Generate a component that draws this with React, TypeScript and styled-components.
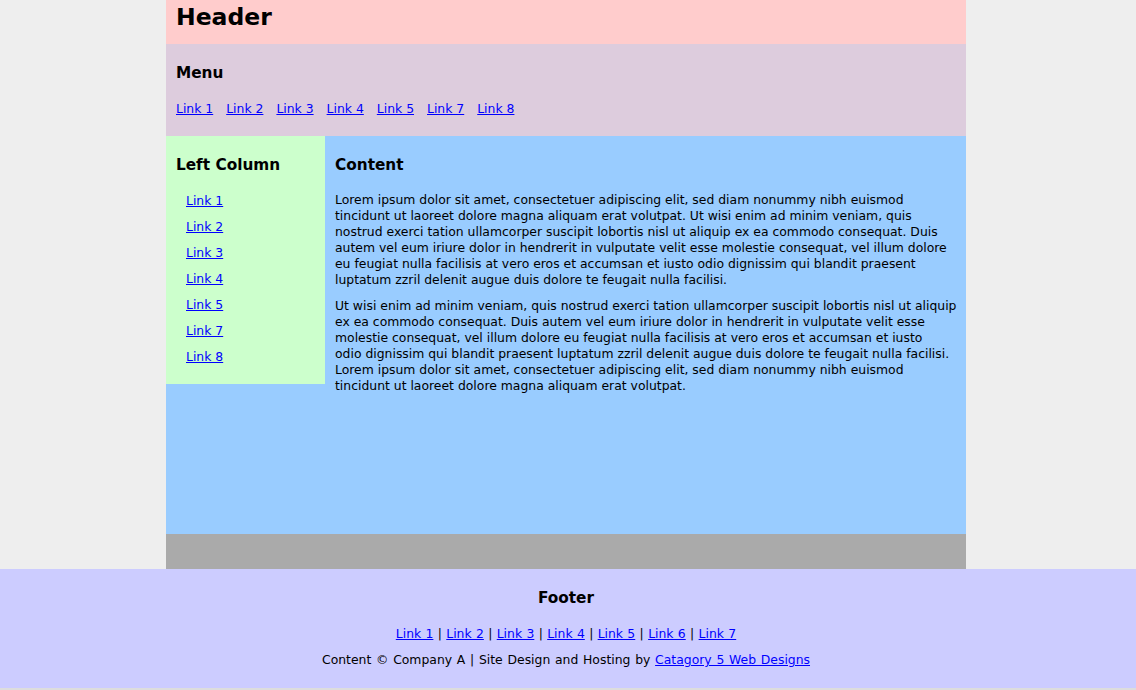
import React from 'react';
import styled, { createGlobalStyle } from 'styled-components';

const GlobalStyle = createGlobalStyle`
  html, body {
    margin: 0;
    padding: 0;
    background: #eeeeee;
    font-family: "DejaVu Sans", Verdana, sans-serif;
    font-size: 12.4px;
    line-height: 16px;
    color: #000;
  }
  a {
    color: #0000ff;
  }
`;

const menuLinks = ['Link 1', 'Link 2', 'Link 3', 'Link 4', 'Link 5', 'Link 7', 'Link 8'];
const footerLinks = ['Link 1', 'Link 2', 'Link 3', 'Link 4', 'Link 5', 'Link 6', 'Link 7'];

export default function App() {
  return (
    <>
      <GlobalStyle />
      <Page>
        <Header>
          <HeaderTitle>Header</HeaderTitle>
        </Header>

        <Menu>
          <SectionTitle>Menu</SectionTitle>
          <MenuLinks>
            {menuLinks.map((l) => (
              <a key={l} href="#">{l}</a>
            ))}
          </MenuLinks>
        </Menu>

        <Body>
          <LeftColumn>
            <SectionTitle>Left Column</SectionTitle>
            <SideList>
              {menuLinks.map((l) => (
                <li key={l}>
                  <a href="#">{l}</a>
                </li>
              ))}
            </SideList>
          </LeftColumn>

          <Content>
            <SectionTitle>Content</SectionTitle>
            <Paragraph>
              Lorem ipsum dolor sit amet, consectetuer adipiscing elit, sed diam nonummy nibh euismod
              tincidunt ut laoreet dolore magna aliquam erat volutpat. Ut wisi enim ad minim veniam, quis
              nostrud exerci tation ullamcorper suscipit lobortis nisl ut aliquip ex ea commodo consequat. Duis
              autem vel eum iriure dolor in hendrerit in vulputate velit esse molestie consequat, vel illum dolore
              eu feugiat nulla facilisis at vero eros et accumsan et iusto odio dignissim qui blandit praesent
              luptatum zzril delenit augue duis dolore te feugait nulla facilisi.
            </Paragraph>
            <Paragraph>
              Ut wisi enim ad minim veniam, quis nostrud exerci tation ullamcorper suscipit lobortis nisl ut aliquip
              ex ea commodo consequat. Duis autem vel eum iriure dolor in hendrerit in vulputate velit esse
              molestie consequat, vel illum dolore eu feugiat nulla facilisis at vero eros et accumsan et iusto
              <br />
              odio dignissim qui blandit praesent luptatum zzril delenit augue duis dolore te feugait nulla facilisi.
              Lorem ipsum dolor sit amet, consectetuer adipiscing elit, sed diam nonummy nibh euismod
              tincidunt ut laoreet dolore magna aliquam erat volutpat.
            </Paragraph>
          </Content>
        </Body>

        <Spacer />
      </Page>

      <Footer>
        <FooterTitle>Footer</FooterTitle>
        <FooterLine $spacing={0.4}>
          {footerLinks.map((l, i) => (
            <React.Fragment key={l}>
              {i > 0 && ' | '}
              <a href="#">{l}</a>
            </React.Fragment>
          ))}
        </FooterLine>
        <FooterLine $spacing={0.8}>
          Content © Company A | Site Design and Hosting by <a href="#">Catagory 5 Web Designs</a>
        </FooterLine>
      </Footer>
      <BottomRule />
    </>
  );
}

const Page = styled.div`
  width: 800px;
  margin: 0 calc(50% - 398px) 0 calc(50% - 402px);
`;

const Header = styled.div`
  background: #ffcccc;
  height: 44px;
  padding: 0 10px;
  box-sizing: border-box;
`;

const HeaderTitle = styled.h1`
  margin: 0;
  padding-top: 2px;
  font-size: 23.5px;
  line-height: 30px;
  font-weight: bold;
`;

const Menu = styled.div`
  background: #ddccdd;
  height: 92px;
  padding: 19px 10px 0;
  box-sizing: border-box;
`;

const SectionTitle = styled.h3`
  margin: 0;
  font-size: 15.3px;
  line-height: 20px;
  font-weight: bold;
`;

const MenuLinks = styled.div`
  display: flex;
  gap: 13px;
  margin-top: 18px;
`;

const Body = styled.div`
  display: flex;
  align-items: flex-start;
  background: #99ccff;
  height: 398px;
`;

const LeftColumn = styled.div`
  width: 159px;
  background: #ccffcc;
  padding: 19px 10px 9px;
  box-sizing: border-box;
`;

const SideList = styled.ul`
  list-style: none;
  margin: 18px 0 0;
  padding: 0 0 0 10px;

  li {
    height: 26px;
  }
`;

const Content = styled.div`
  flex: 1;
  padding: 19px 6px 0 10px;
`;

const Paragraph = styled.p`
  margin: 17px 0 10px;

  & + & {
    margin-top: 0;
  }
`;

const Spacer = styled.div`
  height: 35px;
  background: #aaaaaa;
`;

const Footer = styled.div`
  background: #ccccff;
  height: 119px;
  padding: 19px 4px 0 0;
  box-sizing: border-box;
  text-align: center;
`;

const FooterTitle = styled.h3`
  margin: 0 0 18px;
  font-size: 15.3px;
  line-height: 20px;
  font-weight: bold;
`;

const FooterLine = styled.div<{ $spacing: number }>`
  margin-bottom: 10px;
  word-spacing: ${({ $spacing }) => $spacing}px;
`;

const BottomRule = styled.div`
  height: 2px;
  background: #dddddd;
`;
